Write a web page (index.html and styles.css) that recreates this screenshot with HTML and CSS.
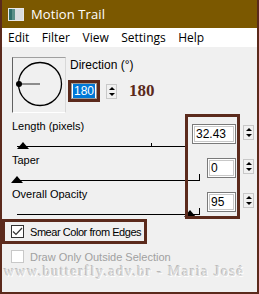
FILE: index.html
```html
<!DOCTYPE html>
<html>
<head>
<meta charset="utf-8">
<link rel="stylesheet" href="styles.css">
</head>
<body>
<div class="window">
  <div class="titlebar">
    <svg class="appicon" width="16" height="13" viewBox="0 0 16 13">
      <rect x="0" y="0" width="16" height="13" fill="#e8e8e8"/>
      <rect x="1" y="1" width="14" height="11" fill="#9fb3b0"/>
      <rect x="1" y="1" width="3" height="11" fill="#2f6e6a"/>
      <rect x="4" y="1" width="3" height="11" fill="#5a8f88"/>
      <rect x="7" y="1" width="8" height="11" fill="#d9dde0"/>
    </svg>
    <span class="title">Motion Trail</span>
  </div>
  <div class="menubar">
    <span class="mi">Edit</span>
    <span class="mi">Filter</span>
    <span class="mi">View</span>
    <span class="mi">Settings</span>
    <span class="mi">Help</span>
  </div>
  <div class="content">
    <div class="dirrow">
      <div class="dialbox">
        <svg width="52" height="54" viewBox="0 0 52 54">
          <circle cx="27" cy="26" r="21.5" fill="none" stroke="#000" stroke-width="1.3"/>
          <line x1="6" y1="26" x2="27" y2="26" stroke="#555" stroke-width="1.3"/>
          <circle cx="6" cy="26" r="3" fill="#000"/>
        </svg>
      </div>
      <div class="dirctl">
        <div class="lbl">Direction (°)</div>
        <div class="dirinrow">
          <div class="hlbox"><div class="field small"><span class="sel">180</span></div></div>
          <div class="spin"><span class="up"></span><span class="dn"></span></div>
          <div class="big">180</div>
        </div>
      </div>
    </div>

    <div class="params">
      <div class="prow">
        <div class="pleft">
          <div class="lbl">Length (pixels)</div>
          <div class="slider"><span class="tick" style="left:134px"></span><span class="thumb" style="left:0px"></span></div>
        </div>
        <div class="field wide">32.43</div>
        <div class="spin"><span class="up"></span><span class="dn"></span></div>
      </div>
      <div class="prow">
        <div class="pleft">
          <div class="lbl">Taper</div>
          <div class="slider endtick"><span class="thumb" style="left:-6px"></span></div>
        </div>
        <div class="field narrow">0</div>
        <div class="spin"><span class="up"></span><span class="dn"></span></div>
      </div>
      <div class="prow">
        <div class="pleft">
          <div class="lbl">Overall Opacity</div>
          <div class="slider endtick"><span class="thumb" style="left:167px"></span></div>
        </div>
        <div class="field narrow">95</div>
        <div class="spin"><span class="up"></span><span class="dn"></span></div>
      </div>
      <div class="frame"></div>
    </div>

    <div class="check checked">
      <span class="box"><svg width="11" height="9" viewBox="0 0 11 9"><path d="M1 4.5 L4 7.5 L10 1" fill="none" stroke="#333" stroke-width="1.2"/></svg></span>
      <span>Smear Color from Edges</span>
    </div>
    <div class="check disabled">
      <span class="box"></span>
      <span>Draw Only Outside Selection</span>
    </div>
    <div class="watermark">www.butterfly.adv.br - Maria José</div>
  </div>
</div>
</body>
</html>
```
FILE: styles.css
```css
html, body {
  margin: 0;
  padding: 0;
  background: #f0f0f0;
}
.window {
  width: 259px;
  height: 294px;
  box-sizing: border-box;
  border: 2px solid #5b2a1c;
  border-top: none;
  background: #f0f0f0;
  display: flex;
  flex-direction: column;
  overflow: hidden;
}
.titlebar {
  height: 28px;
  background: #7b5800;
  display: flex;
  align-items: center;
  padding-left: 8px;
  margin: 0 -2px;
}
.appicon { margin-right: 7px; margin-top: 1px; }
.title {
  color: #fff;
  font-family: "Open Sans", "Noto Sans", sans-serif;
  font-size: 13px;
  letter-spacing: 0.1px;
}
.menubar {
  height: 19px;
  background: #fff;
  display: flex;
  align-items: center;
  padding-left: 6px;
  font-family: "Open Sans", "Noto Sans", sans-serif;
  font-size: 12px;
  color: #000;
}
.mi { margin-right: 12.5px; }
.content {
  flex: 1;
  padding: 10px 0 0 0;
  position: relative;
  font-family: "Liberation Sans", Arial, sans-serif;
  font-size: 11px;
  color: #000;
}
.lbl { font-family: "Liberation Sans", Arial, sans-serif; font-size: 11px; line-height: 13px; }
.dirrow { display: flex; padding-left: 10px; height: 56px; }
.dialbox {
  width: 52px;
  height: 54px;
  border-top: 1px solid #a0a0a0;
  border-left: 1px solid #606060;
  border-right: 1px solid #d8d8d8;
  border-bottom: 1px solid #ffffff;
}
.dialbox svg { display: block; }
.dirctl { margin-left: 4px; padding-top: 2px; }
.dirctl .lbl { font-size: 12px; }
.dirinrow { display: flex; align-items: center; margin-top: 8px; }
.hlbox {
  border: 3px solid #5b2a1c;
  margin-left: -2px;
}
.field {
  box-sizing: border-box;
  height: 20px;
  background: #fff;
  border: 1px solid #7a7a7a;
  box-shadow: inset 0 0 0 1px #fff, inset 0 0 0 2px #c8c8c8;
  font-family: "Liberation Sans", Arial, sans-serif;
  font-size: 12px;
  line-height: 18px;
  padding-left: 3px;
}
.field.small { width: 26px; height: 16px; line-height: 14px; padding-left: 1px; box-shadow: none; border: 1px solid #9a9a9a; }
.sel { background: #0078d7; color: #fff; padding: 0 1px; }
.field.wide { width: 44px; }
.field.narrow { width: 29px; }
.spin {
  width: 11px;
  height: 15px;
  display: flex;
  flex-direction: column;
  justify-content: space-between;
  align-items: center;
  background: #f0f0f0;
  border: 1px solid #c8c8c8;
  box-sizing: border-box;
  margin-left: 7px;
  padding: 2px 0;
}
.dirinrow .spin { margin-left: 6px; }
.up, .dn { width: 0; height: 0; border-left: 3px solid transparent; border-right: 3px solid transparent; }
.up { border-bottom: 3px solid #000; }
.dn { border-top: 3px solid #000; }
.big {
  font-family: "Liberation Serif", "Times New Roman", serif;
  font-weight: bold;
  font-size: 17px;
  color: #5b2a1c;
  margin-left: 12px;
}
.params { position: relative; margin-top: 7px; }
.prow {
  display: grid;
  grid-template-columns: 1fr auto auto;
  align-items: start;
  height: 34px;
  padding-left: 10px;
  padding-right: 3px;
}
.prow .field { margin-left: 7px; margin-top: 4px; }
.prow .spin { margin-top: 5px; }
.slider {
  position: relative;
  height: 8px;
  margin-top: 5px;
  margin-left: 5px;
  border-bottom: 1px solid #000;
}
.slider.endtick { border-right: 1px solid #000; height: 6px; margin-top: 7px; }
.tick { position: absolute; bottom: 0; width: 1px; height: 3px; background: #000; }
.thumb {
  position: absolute;
  top: 4px;
  width: 0; height: 0;
  border-left: 6px solid transparent;
  border-right: 6px solid transparent;
  border-bottom: 7px solid #000;
}
.slider.endtick .thumb { top: 2px; }
.frame {
  position: absolute;
  left: 183px;
  top: -6px;
  width: 49px;
  height: 99px;
  border: 3px solid #5b2a1c;
  pointer-events: none;
}
.check {
  display: flex;
  align-items: center;
  font-family: "Liberation Sans", Arial, sans-serif;
  font-size: 11px;
  white-space: nowrap;
}
.check.checked {
  box-sizing: border-box;
  width: 145px;
  height: 25px;
  border: 3px solid #5b2a1c;
  margin-top: -3px;
  padding-left: 6px;
  font-size: 11px;
  letter-spacing: -0.45px;
}
.box {
  width: 13px; height: 13px;
  box-sizing: border-box;
  border: 1px solid #333;
  background: #fff;
  margin-right: 6px;
  display: flex; align-items: center; justify-content: center;
  flex: none;
}
.check.disabled { color: #a0a0a0; margin-top: 6px; padding-left: 9px; font-size: 11px; }
.check.disabled .box { border-color: #c8c8c8; margin-right: 6px; }
.watermark {
  font-family: "Liberation Serif", "Times New Roman", serif;
  font-size: 14px;
  color: #d6d6d6;
  letter-spacing: 1.5px;
  text-shadow: 1px 1px 0 #fff, -1px -1px 0 #b8b8b8;
  margin-top: 1px;
  padding-left: 2px;
  white-space: nowrap;
}
```
